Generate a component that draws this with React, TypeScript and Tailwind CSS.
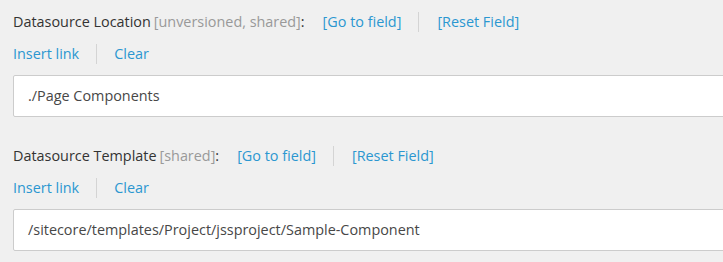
import React from "react";

const font = { fontFamily: '"Open Sans", Arial, sans-serif' };

function Field({
  label,
  meta,
  value,
}: {
  label: string;
  meta: string;
  value: string;
}) {
  return (
    <div className="flex flex-col">
      <div className="flex items-center h-[20px] text-[14.4px] leading-[20px]">
        <span className="text-[#333333]">{label}</span>
        <span className="text-[#999999] ml-[3px]">{meta}</span>
        <span className="text-[#333333]">:</span>
        <a className="text-[#2b97d0] ml-[18px] pr-[17px] border-r border-[#d4d4d4]">[Go to field]</a>
        <a className="text-[#2b97d0] pl-[18px]">[Reset Field]</a>
      </div>
      <div className="flex items-center h-[20px] mt-[12px] text-[14.4px] leading-[20px]">
        <a className="text-[#2b97d0] pr-[17px] border-r border-[#d4d4d4]">Insert link</a>
        <a className="text-[#2b97d0] pl-[17px]">Clear</a>
      </div>
      <div className="mt-[11px] h-[42px] w-[740px] bg-white border border-[#cccccc] rounded-[2px] flex items-center pl-[14px] text-[14.4px] text-[#474747]">
        {value}
      </div>
    </div>
  );
}

export default function App() {
  return (
    <div
      className="w-[723px] h-[262px] bg-[#f0f0f0] overflow-hidden pl-[13px] pt-[12px] flex flex-col gap-[29px]"
      style={font}
    >
      <Field
        label="Datasource Location"
        meta="[unversioned, shared]"
        value="./Page Components"
      />
      <Field
        label="Datasource Template"
        meta="[shared]"
        value="/sitecore/templates/Project/jssproject/Sample-Component"
      />
    </div>
  );
}
